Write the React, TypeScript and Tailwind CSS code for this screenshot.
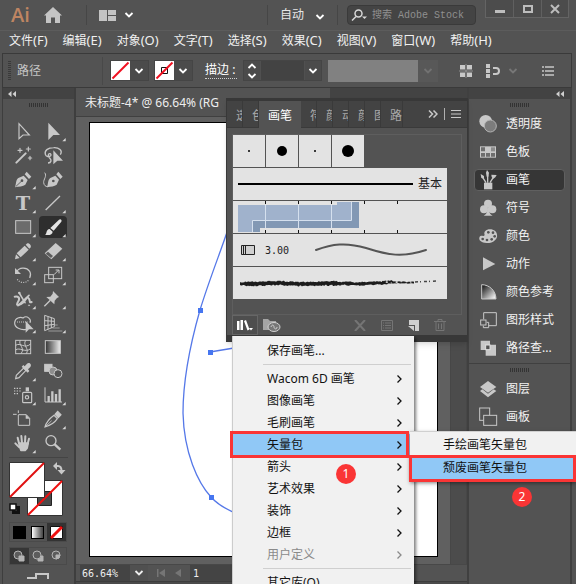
import { type ReactNode } from 'react';
import clsx from 'clsx';

const icon = '#c8c8c8';

const menus = [
  { label: '文件', key: 'F' },
  { label: '编辑', key: 'E' },
  { label: '对象', key: 'O' },
  { label: '文字', key: 'T' },
  { label: '选择', key: 'S' },
  { label: '效果', key: 'C' },
  { label: '视图', key: 'V' },
  { label: '窗口', key: 'W' },
  { label: '帮助', key: 'H' },
];

interface Tool {
  name: string;
  art: ReactNode;
  more?: boolean;
  active?: boolean;
}

// Every tool glyph is drawn on an 84x66 board
const tools: Tool[] = [
  { name: '选择工具', art: <path d="M30 11V56L42 45H61Z" fill="none" stroke={icon} strokeWidth="3.5" /> },
  { name: '直接选择工具', more: true, art: <path d="M28 8V60L43 45H63Z" fill={icon} /> },
  {
    name: '魔棒工具',
    art: (
      <g stroke={icon} strokeLinecap="round" fill="none">
        <path d="M22 56 50 28" strokeWidth="6" />
        <path d="M33 13v12M27 19h12M58 9v12M52 15h12M63 37v10M58 42h10" strokeWidth="3.5" />
      </g>
    ),
  },
  {
    name: '套索工具',
    art: (
      <g>
        <path
          d="M64 32C72 20 60 10 44 11 26 11 16 20 19 31c2 8 12 8 16 4 4-6-6-9-7-2-1 8 9 10 8 18-1 4-5 6-9 6"
          fill="none" stroke={icon} strokeWidth="4"
        />
        <path d="M43 19V61L55 50H72Z" fill={icon} />
      </g>
    ),
  },
  {
    name: '钢笔工具',
    more: true,
    art: (
      <g>
        <path d="M18 58C22 46 20 36 28 30L44 23 56 36 49 50C42 56 30 55 18 58Z" fill={icon} />
        <path d="M47 19 53 11 67 26 60 33Z" fill={icon} />
        <path d="M20 56 37 40" stroke="#535353" strokeWidth="2.5" />
        <circle cx="39" cy="38" r="4" fill="#535353" />
      </g>
    ),
  },
  {
    name: '曲率工具',
    art: (
      <g>
        <path d="M24 58C28 46 26 36 34 30L49 23 60 35 53 50C46 56 36 55 24 58Z" fill={icon} />
        <path d="M52 19 58 11 71 26 64 33Z" fill={icon} />
        <circle cx="43" cy="39" r="4" fill="#535353" />
        <path d="M17 14c8 10-4 20-3 30 1 8 6 12 12 12" fill="none" stroke={icon} strokeWidth="3" />
      </g>
    ),
  },
  {
    name: '文字工具',
    more: true,
    art: <text x="42" y="54" fontSize="58" textAnchor="middle" fill={icon} fontFamily="DejaVu Serif, serif" fontWeight="700">T</text>,
  },
  { name: '直线段工具', more: true, art: <path d="M20 54 63 12" stroke={icon} strokeWidth="4" /> },
  {
    name: '矩形工具',
    more: true,
    art: <rect x="20" y="14" width="45" height="38" fill="#6c6c6c" stroke={icon} strokeWidth="3" />,
  },
  {
    name: '画笔工具',
    more: true,
    active: true,
    art: (
      <g fill="#e4e4e4">
        <path d="M34 36 60 11C64 7 70 11 67 17L44 44Z" />
        <path d="M18 56C25 53 20 40 32 39l9 8C41 57 28 59 18 56Z" />
      </g>
    ),
  },
  {
    name: '铅笔工具',
    more: true,
    art: (
      <g fill={icon}>
        <path d="M23 40 47 17 59 29 35 52Z" />
        <path d="M50 14 55 10C60 8 68 16 65 22L61 26Z" />
        <path d="M21 43 32 54 18 58Z" />
      </g>
    ),
  },
  {
    name: '橡皮擦工具',
    more: true,
    art: (
      <g>
        <path d="M17 40 50 9 70 26 37 58Z" fill={icon} />
        <path d="M20 41 27 35 42 48 36 54Z" fill="#5c5c5c" />
      </g>
    ),
  },
  {
    name: '旋转工具',
    more: true,
    art: (
      <g fill="none" stroke={icon} strokeWidth="3.5">
        <path d="M22 24C30 10 52 8 62 22c4 7 3 14 0 20" />
        <path d="M58 49C50 58 32 58 25 46" strokeDasharray="3 4" />
        <path d="M18 12V30H36Z" fill={icon} stroke="none" />
      </g>
    ),
  },
  {
    name: '比例缩放工具',
    more: true,
    art: (
      <g fill="none" stroke={icon} strokeWidth="3">
        <rect x="29" y="10" width="39" height="34" />
        <rect x="17" y="32" width="26" height="24" />
        <path d="M45 32 59 18M50 18H60V28" />
      </g>
    ),
  },
  {
    name: '宽度工具',
    more: true,
    art: (
      <g fill="none" stroke={icon} strokeLinecap="round">
        <path d="M17 26C28 24 34 30 28 40S20 54 36 48 50 24 58 30 58 46 68 42" strokeWidth="6" />
        <path d="M30 14 48 44M27 53 60 22" strokeWidth="5" />
        <circle cx="31" cy="15" r="3" fill={icon} />
        <circle cx="60" cy="52" r="2" fill={icon} />
      </g>
    ),
  },
  {
    name: '操控变形工具',
    more: true,
    art: (
      <g>
        <path d="M42 9 60 27 54 30 47 38 46 49 22 27 34 26 41 17Z" fill={icon} />
        <path d="M34 37 16 55" stroke={icon} strokeWidth="4" />
      </g>
    ),
  },
  {
    name: '形状生成器工具',
    more: true,
    art: (
      <g>
        <path
          d="M52 52C36 56 16 46 17 32 18 18 34 14 42 18 54 8 68 22 63 32"
          fill="none" stroke={icon} strokeWidth="3.5"
        />
        <path d="M24 30H56" stroke={icon} strokeWidth="3" strokeDasharray="3 3" />
        <path d="M50 27V62L60 52H74Z" fill={icon} />
      </g>
    ),
  },
  {
    name: '透视网格工具',
    more: true,
    art: (
      <g fill="none" stroke={icon} strokeWidth="3">
        <path d="M17 10V56L46 44V20ZM27 14V52M37 17V48M17 26 46 28M17 41 46 37" />
        <path d="M48 39H56M40 48H62M28 57H70" stroke="#9a9a9a" />
      </g>
    ),
  },
  {
    name: '网格工具',
    art: (
      <g fill="none" stroke={icon} strokeWidth="3">
        <rect x="20" y="13" width="45" height="40" />
        <path d="M34 13C26 26 50 36 36 53M50 13C40 28 62 38 52 53M20 28C34 18 46 40 65 24M20 42C32 32 48 52 65 38" />
      </g>
    ),
  },
  {
    name: '渐变工具',
    art: (
      <g>
        <defs>
          <linearGradient id="tool-gradient">
            <stop offset="0" stopColor="#333333" />
            <stop offset="1" stopColor="#eeeeee" />
          </linearGradient>
        </defs>
        <rect x="19" y="14" width="45" height="38" fill="url(#tool-gradient)" stroke={icon} strokeWidth="3" />
      </g>
    ),
  },
  {
    name: '吸管工具',
    more: true,
    art: (
      <g>
        <path d="M20 56 22 46 44 24 51 31 30 53Z" fill="none" stroke={icon} strokeWidth="3.5" />
        <path d="M38 20 43 15 47 19 54 11C60 5 70 13 64 21L57 28 61 33 56 38Z" fill={icon} />
      </g>
    ),
  },
  {
    name: '混合工具',
    art: (
      <g stroke={icon} strokeWidth="3">
        <rect x="17" y="13" width="22" height="21" fill={icon} />
        <circle cx="42" cy="33" r="12" fill="#8e8e8e" />
        <circle cx="57" cy="41" r="12" fill="#535353" />
      </g>
    ),
  },
  {
    name: '符号喷枪工具',
    more: true,
    art: (
      <g fill="none" stroke={icon} strokeWidth="3.5">
        <path d="M15 13H38M15 21H38M15 29H30" strokeDasharray="4 4" />
        <path d="M50 10H60V22H50Z" fill={icon} stroke="none" />
        <rect x="41" y="25" width="27" height="31" rx="3" />
        <circle cx="54" cy="40" r="5" />
      </g>
    ),
  },
  {
    name: '柱形图工具',
    more: true,
    art: (
      <g fill="none" stroke={icon}>
        <path d="M18 10V54H69" strokeWidth="3" />
        <path d="M29 54V36M40 54V22M51 54V30M62 54V16" strokeWidth="7" />
      </g>
    ),
  },
  {
    name: '画板工具',
    art: (
      <g fill="none" stroke={icon} strokeWidth="3">
        <path d="M12 19H23M28 7V15M28 21V52H62V31L52 20H28" />
        <path d="M50 19V32H63Z" fill={icon} stroke="none" />
      </g>
    ),
  },
  {
    name: '切片工具',
    more: true,
    art: (
      <g fill="none" stroke={icon} strokeWidth="3.5">
        <path d="M18 57C22 42 34 30 45 22L55 32C46 46 34 52 18 57Z" />
        <path d="M48 19 56 10 66 20 58 29Z" fill={icon} />
        <path d="M20 55 38 38" strokeWidth="2.5" />
      </g>
    ),
  },
  {
    name: '抓手工具',
    more: true,
    art: (
      <g stroke={icon} fill={icon} strokeLinecap="round" strokeWidth="6">
        <path d="M30 34 26 17M39 32 37 12M48 32 49 13M56 35 60 20M31 46 19 34" />
        <path d="M30 34H57L54 48 48 55H36Z" strokeLinejoin="round" />
      </g>
    ),
  },
  {
    name: '缩放工具',
    art: (
      <g fill="none" stroke={icon}>
        <circle cx="36" cy="26" r="15" strokeWidth="4" />
        <path d="M47 37 64 53" strokeWidth="7" />
      </g>
    ),
  },
];

// Dock glyphs use a 60x60 board
const panels = [
  {
    name: '透明度',
    art: (
      <g>
        <circle cx="23" cy="22" r="19" fill={icon} />
        <circle cx="37" cy="36" r="18" fill="#7c7c7c" stroke="#b4b4b4" strokeWidth="3" />
      </g>
    ),
  },
  {
    name: '色板',
    art: (
      <g>
        <rect x="6" y="13" width="48" height="34" fill={icon} />
        <path d="M9 16h12v12H9zM9 33h12v11H9zM24 33h12v11H24zM39 33h12v11H39z" fill="#6e6e6e" />
        <path d="M39 16h12v12H39z" fill="#8c8c8c" />
      </g>
    ),
  },
  {
    name: '画笔',
    active: true,
    art: (
      <g stroke={icon} fill={icon}>
        <path d="M18 38H43V58H18Z" stroke="none" />
        <path d="M24 38 14 22M29 38V14M36 38 46 22" strokeWidth="4" />
        <path d="M8 12 18 18 18 26 10 24ZM27 0 33 8 31 20H26L24 8ZM40 14 56 15 52 22 46 26 41 21Z" stroke="none" />
      </g>
    ),
  },
  {
    name: '符号',
    art: (
      <g fill={icon}>
        <circle cx="30" cy="17" r="12" />
        <circle cx="18" cy="34" r="12" />
        <circle cx="43" cy="34" r="12" />
        <path d="M28 28H33C33 42 34 48 44 53H17C27 48 28 42 28 28Z" />
      </g>
    ),
  },
  {
    name: '颜色',
    art: (
      <g>
        <path d="M57 26C60 40 44 52 26 51 10 50 0 42 5 32 9 26 17 34 20 27 16 18 24 10 36 10 48 10 56 17 57 26Z" fill={icon} />
        <g fill="#535353">
          <circle cx="31" cy="19" r="4" />
          <circle cx="45" cy="20" r="4" />
          <circle cx="50" cy="31" r="4" />
          <circle cx="41" cy="40" r="4" />
          <circle cx="27" cy="42" r="4" />
          <circle cx="14" cy="39" r="4" />
        </g>
      </g>
    ),
  },
  { name: '动作', art: <path d="M15 10 52 30 15 49Z" fill={icon} /> },
  {
    name: '颜色参考',
    art: (
      <g>
        <defs>
          <linearGradient id="guide-gradient" x1="0" y1="0" x2="1" y2="1">
            <stop offset="0.1" stopColor="#222222" />
            <stop offset="0.9" stopColor="#eeeeee" />
          </linearGradient>
        </defs>
        <path d="M11 8C34 8 54 26 54 51H11Z" fill="url(#guide-gradient)" stroke={icon} strokeWidth="3" />
      </g>
    ),
  },
  {
    name: '图形样式',
    art: (
      <g fill="none" stroke={icon} strokeWidth="3">
        <path d="M17 28V8H55V47H32" />
        <rect x="8" y="30" width="16" height="15" />
        <path d="M26 37H32V53H16V47" />
      </g>
    ),
  },
  {
    name: '路径查...',
    art: (
      <g>
        <path d="M8 8H36V20H54V53H23V36H8Z" fill={icon} />
        <rect x="23" y="21" width="13" height="14" fill="#535353" stroke="#e0e0e0" strokeWidth="3" />
      </g>
    ),
  },
];

const lowerPanels = [
  {
    name: '图层',
    art: (
      <g fill={icon}>
        <path d="M30 6 55 24 30 41 6 24Z" />
        <path d="M6 36 13 31 30 44 47 31 55 36 30 55Z" />
      </g>
    ),
  },
  {
    name: '画板',
    art: (
      <g fill="#535353" stroke={icon} strokeWidth="3">
        <rect x="5" y="3" width="30" height="37" />
        <rect x="17" y="25" width="39" height="30" />
      </g>
    ),
  },
];

const libraries = [
  { name: 'Wacom 6D 画笔' },
  { name: '图像画笔' },
  { name: '毛刷画笔' },
  { name: '矢量包', active: true },
  { name: '箭头' },
  { name: '艺术效果' },
  { name: '装饰' },
  { name: '边框' },
  { name: '用户定义', disabled: true },
];

const brushTips = [
  { name: '3 点圆形', r: 1 },
  { name: '15 点圆形', r: 5 },
  { name: '扁平', r: 1 },
  { name: '20 点圆形', r: 6 },
];

// Ragged outline of the charcoal brush preview, thinning out to the right
function charcoalPath() {
  const top: string[] = [];
  const bottom: string[] = [];
  for (let x = 7; x < 182; x += 1) {
    const body = x < 12 ? 1.5 : x < 105 ? 2.2 : x < 160 ? 1.8 : 1;
    const a = Math.abs(Math.sin(x * 12.9898) * 43.7) % 1;
    const b = Math.abs(Math.sin(x * 78.233) * 31.3) % 1;
    const mid = 16.5 - Math.max(0, x - 120) / 45 + Math.sin(x / 9) * 0.4;
    top.push(`${x} ${(mid - body * (0.6 + a * 0.6)).toFixed(1)}`);
    bottom.unshift(`${x} ${(mid + body * (0.6 + b * 0.7)).toFixed(1)}`);
  }
  return `M${[...top, ...bottom].join('L')}Z`;
}

function Chevron({ className }: { className?: string }) {
  return (
    <svg viewBox="0 0 10 6" className={clsx('h-[6px] w-[10px] shrink-0', className)} fill="none" stroke="currentColor" strokeWidth="1.8">
      <path d="M1.500 1 5 4.500 8.500 1" />
    </svg>
  );
}

function Grip() {
  return (
    <div className="flex h-1 justify-center gap-px">
      {Array.from({ length: 10 }, (_, i) => (
        <span key={i} className="w-px bg-[#333333]" />
      ))}
    </div>
  );
}

function Collapse() {
  return (
    <svg viewBox="0 0 8 6" className="h-[6px] w-2" fill="#d0d0d0">
      <path d="M3.500 0V6L0 3ZM8 0V6L4.500 3Z" />
    </svg>
  );
}

function TitleBar() {
  return (
    <header className="flex h-[30px] items-center text-[#d8d8d8]">
      <span className="ml-[11px] w-[19px] font-[Open_Sans,sans-serif] text-xl font-semibold leading-7 text-[#be8562]">Ai</span>
      <button type="button" aria-label="主页" className="ml-[14px]">
        <svg viewBox="0 0 18 16" className="h-4 w-[18px]" fill="#c4c4c4">
          <path d="M9 0 18 8.500H16V16H11V10.500H7V16H2V8.500H0Z" />
        </svg>
      </button>
      <span className="ml-[24px] h-5 w-px bg-[#464646]" />
      <button type="button" aria-label="排列文档" className="ml-[12px] flex items-center gap-2 text-white">
        <svg viewBox="0 0 17 11" className="h-[11px] w-[17px]" fill="#c4c4c4">
          <path d="M0 0h8v11H0zM9 0h8v5H9zM9 6h8v5H9z" />
        </svg>
        <Chevron />
      </button>
      <div className="flex-1" />
      <span className="h-5 w-px bg-[#464646]" />
      <label className="relative ml-[12px] flex items-center">
        <select aria-label="工作区" className="w-12 appearance-none bg-transparent text-xs text-[#e6e6e6] outline-none">
          <option>自动</option>
        </select>
        <Chevron className="pointer-events-none -ml-[13px] mt-1 text-white" />
      </label>
      <span className="ml-[12px] h-5 w-px bg-[#464646]" />
      <label className="ml-[9px] flex h-[20px] w-[129px] items-center gap-1 rounded-sm border border-[#3a3a3a] bg-[#444444] pl-[3px]">
        <svg viewBox="0 0 17 12" className="h-3 w-[17px] shrink-0" fill="none" stroke="#d8d8d8" strokeWidth="1.5">
          <circle cx="7.500" cy="4.500" r="3.500" />
          <path d="M5 7.500 1 11.500" />
          <path d="M11 7.500h5L13.500 10Z" fill="#d8d8d8" stroke="none" />
        </svg>
        <input
          type="search"
          aria-label="搜索 Adobe Stock"
          placeholder="搜索 Adobe Stock"
          className="w-full min-w-0 bg-transparent font-[Liberation_Mono,Noto_Sans_CJK_SC,monospace] text-[10px] outline-none placeholder:text-[#909090]"
        />
      </label>
      <div className="ml-[9px] mr-[7px] flex h-[18px] self-start border border-t-0 border-[#646464] bg-[#4c4c4c]">
        <button type="button" aria-label="最小化" className="flex w-7 items-center justify-center border-r border-[#606060]">
          <span className="mt-[6px] h-[3px] w-[10px] bg-[#bdbdbd]" />
        </button>
        <button type="button" aria-label="最大化" className="flex w-7 items-center justify-center border-r border-[#606060]">
          <span className="h-2 w-[10px] border-2 border-[#bdbdbd]" />
        </button>
        <button type="button" aria-label="关闭" className="flex w-[26px] items-center justify-center">
          <svg viewBox="0 0 10 10" className="h-[10px] w-[10px]" stroke="#bdbdbd" strokeWidth="2">
            <path d="M1 1 9 9M9 1 1 9" />
          </svg>
        </button>
      </div>
    </header>
  );
}

function MenuBar() {
  return (
    <nav className="flex h-[23px] items-start gap-[15px] border-t border-[#5c5c5c] pl-[9px] text-xs leading-[18px] text-[#f0f0f0]">
      {menus.map((menu) => (
        <button key={menu.key} type="button" className="whitespace-nowrap">
          {menu.label}
          <span className="text-[13px]">({menu.key})</span>
        </button>
      ))}
    </nav>
  );
}

function ControlBar() {
  return (
    <div className="ml-[2px] mr-1 flex h-[35px] items-center border border-[#3a3a3a] text-xs text-white">
      <svg viewBox="0 0 3 19" className="ml-[5px] h-[19px] w-[3px]" stroke="#3a3a3a" strokeWidth="3" strokeDasharray="1 1">
        <path d="M1.500 0V19" />
      </svg>
      <span className="ml-[6px] text-[#c4c4c4]">路径</span>
      <span className="ml-[61px] h-7 w-px bg-[#494949]" />
      <button type="button" aria-label="填色" className="ml-[7px] flex h-[21px] w-[39px] items-center gap-1 border border-[#454545] bg-[#4b4b4b]">
        <svg viewBox="0 0 19 19" className="h-[19px] w-[19px]">
          <path d="M0 0h19v19H0z" fill="#ffffff" />
          <path d="M1.500 17.500 17.500 1.500" stroke="#f01020" strokeWidth="2" />
        </svg>
        <Chevron />
      </button>
      <button type="button" aria-label="描边颜色" className="ml-[5px] flex h-[21px] w-[39px] items-center gap-1 border border-[#454545] bg-[#4b4b4b]">
        <svg viewBox="0 0 19 19" className="h-[19px] w-[19px]">
          <path d="M0 0h19v19H0z" fill="#ffffff" />
          <path d="M6.500 6.500h6v6h-6z" fill="none" stroke="#111111" />
          <path d="M1.500 17.500 17.500 1.500" stroke="#f01020" strokeWidth="2" />
        </svg>
        <Chevron />
      </button>
      <label htmlFor="stroke-weight" className="ml-3 w-[32px] whitespace-nowrap border-b border-dotted border-[#d0d0d0] leading-4">
        描边 :
      </label>
      <div className="ml-[6px] flex h-[21px] border border-[#454545] bg-[#434343]">
        <button type="button" aria-label="调整描边粗细" className="flex w-[17px] flex-col items-center justify-center gap-1 border-r border-[#505050] bg-[#4b4b4b]">
          <Chevron className="rotate-180" />
          <Chevron />
        </button>
        <input id="stroke-weight" type="text" className="w-[43px] bg-transparent px-1 outline-none" />
        <button type="button" aria-label="描边粗细预设" className="flex w-[17px] items-center justify-center border-l border-[#505050] bg-[#4b4b4b]">
          <Chevron />
        </button>
      </div>
      <label className="ml-[6px] flex h-[22px] items-center bg-[#585858]">
        <select disabled aria-label="变量宽度配置文件" className="h-full w-[90px] appearance-none bg-[#818181]" />
        <Chevron className="mx-[5px] text-[#727272]" />
      </label>
      <div className="flex-1" />
      <button type="button" aria-label="对齐" className="mr-[13px]">
        <svg viewBox="0 0 14 14" className="h-[14px] w-[14px]" fill={icon}>
          <path d="M1 1h5v4.500H1zM8 1h5v4.500H8zM1 8.500h5V13H1zM8 8.500h5V13H8z" />
          <path d="M7 0V14M0 7H14" stroke={icon} strokeWidth="0.5" />
        </svg>
      </button>
      <button type="button" aria-label="变换" className="mr-[24px] flex items-center gap-2 text-[#777777]">
        <svg viewBox="0 0 14 14" className="h-[14px] w-[14px]" fill={icon}>
          <path d="M0 0h4v4H0zM0 5h4v4H0zM0 10h4v4H0z" />
          <path d="M7 4h3a3 3 0 0 1 0 6H7" fill="none" stroke={icon} strokeWidth="2" />
        </svg>
        <Chevron />
      </button>
      <button type="button" aria-label="面板选项" className="mr-[17px]">
        <svg viewBox="0 0 12 10" className="h-[10px] w-3" stroke={icon} strokeWidth="1.5">
          <path d="M0 1H2M3 1H12M0 5H2M3 5H12M0 9H2M3 9H12" />
        </svg>
      </button>
    </div>
  );
}

function ToolPanel() {
  return (
    <aside className="ml-[2px] flex w-[74px] shrink-0 flex-col border-r-2 border-l border-[#3e3e3e]">
      <div className="flex h-[11px] items-center bg-[#434343] pl-[5px]">
        <Collapse />
      </div>
      <div className="px-[6px] pt-1">
        <Grip />
        <div className="mt-[13px] grid grid-cols-[28px_28px] gap-[2px]">
          {tools.map((tool) => (
            <button
              key={tool.name}
              type="button"
              aria-label={tool.name}
              className={clsx('h-[22px] w-7', tool.active && 'rounded-sm bg-[#2e2e2e]')}
            >
              <svg viewBox="0 0 84 66" className="h-[22px] w-7">
                {tool.art}
                {tool.more && <path d="M80 54V64H70Z" fill="#d8d8d8" />}
              </svg>
            </button>
          ))}
        </div>
        <div className="mt-[3px] h-px bg-[#444444]" />
        <svg viewBox="0 0 57 54" className="mt-1 h-[54px] w-[57px]" role="img" aria-label="填色和描边">
          <path d="M18.500 18.500h35v35h-35z" fill="#ffffff" stroke="#333333" />
          <path d="M28.500 29.500h14v14h-14z" fill="#4a4a4a" stroke="#222222" />
          <path d="M19 53 53 19" stroke="#f01010" strokeWidth="2" />
          <path d="M.5.5h35v35H.5z" fill="#ffffff" stroke="#333333" />
          <path d="M1 35 35 1" stroke="#e01010" strokeWidth="2" />
          <path d="M46 4H49C52 4 52.500 6 52.500 9" fill="none" stroke={icon} strokeWidth="2" />
          <path d="M48 0V8L44 4ZM48.500 8H56.500L52.500 12.500Z" fill={icon} />
          <path d="M4.500 45.500h5v5h-5z" fill="none" stroke="#111111" strokeWidth="3" />
          <path d="M1 42h6v6H1z" fill="#ffffff" stroke="#111111" strokeWidth="1.5" />
        </svg>
        <div className="mt-[6px] grid h-5 w-[58px] grid-cols-3 border border-[#4a4a4a]">
          <button type="button" aria-label="颜色" className="flex items-center justify-center">
            <span className="h-[13px] w-[13px] bg-black" />
          </button>
          <button type="button" aria-label="渐变" className="flex items-center justify-center">
            <span className="h-[13px] w-[13px] border border-black bg-linear-to-r from-white to-[#444444]" />
          </button>
          <button type="button" aria-label="无" className="flex items-center justify-center bg-[#333333]">
            <svg viewBox="0 0 13 13" className="h-[13px] w-[13px]">
              <path d="M.5.5h12v12H.5z" fill="#ffffff" stroke="#111111" />
              <path d="M1 12 12 1" stroke="#f01010" strokeWidth="3" />
            </svg>
          </button>
        </div>
        <div className="mt-[5px] grid h-[18px] w-[58px] grid-cols-3 border border-[#4a4a4a]">
          {['正常绘图', '背面绘图', '内部绘图'].map((mode, i) => (
            <button key={mode} type="button" aria-label={mode} className={clsx('flex items-center justify-center', i === 0 && 'bg-[#363636]')}>
              <svg viewBox="0 0 12 12" className="h-3 w-3" fill="none" stroke="#b4b4b4">
                {i === 1 && <path d="M6 6h5v5H6z" fill="#b4b4b4" />}
                <circle cx="5" cy="5" r="4" fill="#5c5c5c" />
                {i === 0 && <path d="M6 6h5v5H6z" fill="#b4b4b4" />}
                {i === 2 && <path d="M5 5h4A4 4 0 0 1 5 9z" fill="#b4b4b4" />}
              </svg>
            </button>
          ))}
        </div>
        <button type="button" aria-label="更改屏幕模式" className="ml-[18px] mt-2 block">
          <svg viewBox="0 0 22 6" className="h-[6px] w-[22px]" fill={icon}>
            <path d="M8 0H22V6H20V2H10V6H0V4H8Z" />
          </svg>
        </button>
      </div>
    </aside>
  );
}

function DocumentArea() {
  return (
    <main className="flex min-w-0 flex-1 flex-col bg-[#606060]">
      <div className="flex h-[29px] bg-[#434343]">
        <div className="w-[254px] whitespace-nowrap border-b border-[#404040] bg-[#535353] pl-[9px] pt-[2px] text-xs leading-[26px] text-[#eeeeee]">
          未标题-4* @ 66.64% (RG
        </div>
      </div>
      <div className="flex min-h-0 flex-1">
        <div className="relative mb-[7px] ml-[13px] mr-3 mt-[5px] flex-1 border border-black bg-white">
          <svg viewBox="0 0 160 420" className="absolute left-0 top-0 h-[420px] w-[160px]" fill="none" stroke="#5578e8" strokeWidth="1.3">
            <path d="M144 88C135 118 121 151 110 187 100 222 93 258 93 290 94 330 108 360 121 374 128 382 137 387 150 392" />
            <path d="M120 229 150 224" />
            <path d="M108 185h5v5h-5zM118 227h5v5h-5zM119 372h5v5h-5z" fill="#4676f0" stroke="none" />
          </svg>
        </div>
        <div className="w-[17px] border-x border-[#474747] bg-[#4c4c4c]" />
      </div>
      <div className="flex h-[17px] border-t border-[#484848] bg-[#535353] font-[DejaVu_Sans_Mono,monospace] text-[10px] text-[#eeeeee]">
        <label className="ml-1 flex w-[68px] items-center bg-[#444444]">
          <select aria-label="缩放级别" className="w-[50px] appearance-none bg-transparent pl-[2px] outline-none">
            <option>66.64%</option>
          </select>
          <span className="flex h-full flex-1 items-center justify-center bg-[#505050]">
            <Chevron />
          </span>
        </label>
        <div className="flex w-[42px] items-center justify-center">
          <svg viewBox="0 0 26 8" className="h-2 w-[26px]" fill="#757575">
            <path d="M1 0H2.500V8H1ZM9 0V8L3 4ZM25 0V8L19 4Z" />
          </svg>
        </div>
        <input aria-label="画板导航" defaultValue="1" className="w-[48px] bg-[#444444] pl-[3px] outline-none" />
      </div>
      <div className="h-[3px] border-t border-[#3c3c3c] bg-[#4a4a4a]" />
    </main>
  );
}

function PanelButton({ name, art, active }: { name: string; art: ReactNode; active?: boolean }) {
  return (
    <button
      type="button"
      className={clsx(
        'flex h-[22px] w-full items-center gap-2 rounded-sm border pl-[3px] text-left text-xs text-[#f2f2f2]',
        active ? 'border-[#606060] bg-[#363636]' : 'border-transparent',
      )}
    >
      <svg viewBox="0 0 60 60" className="h-5 w-5 shrink-0">{art}</svg>
      <span className="whitespace-nowrap">{name}</span>
    </button>
  );
}

function Dock() {
  return (
    <aside className="mr-1 flex w-[105px] shrink-0 flex-col border-x-2 border-[#404040]">
      <div className="flex h-[11px] items-center justify-end bg-[#434343] pr-[6px]">
        <Collapse />
      </div>
      <div className="flex flex-col gap-[6px] px-[5px] pb-1 pt-1">
        <Grip />
        {panels.map((panel) => (
          <PanelButton key={panel.name} {...panel} />
        ))}
      </div>
      <div className="flex flex-col gap-[6px] border-t border-[#404040] px-[5px] pt-1">
        <Grip />
        {lowerPanels.map((panel) => (
          <PanelButton key={panel.name} {...panel} />
        ))}
      </div>
    </aside>
  );
}

function ClippedTab({ name, last }: { name: string; last?: boolean }) {
  return (
    <button
      type="button"
      className={clsx('overflow-hidden whitespace-nowrap border-r border-[#3a3a3a] pl-[9px] pt-[3px] text-left text-[#a8a8a8]', last ? 'w-[22px]' : 'w-4')}
    >
      {name}
    </button>
  );
}

function BrushPanel() {
  return (
    <section aria-label="画笔" className="absolute left-[226px] top-[98px] w-[242px] border-x border-t-3 border-b-[7px] border-[#383838] bg-[#535353] shadow-md">
      <div className="flex h-[27px] border-b border-[#3a3a3a] bg-[#434343] text-xs leading-6">
        <ClippedTab name="透" />
        <ClippedTab name="色" />
        <button type="button" className="-mb-px w-[42px] bg-[#535353] pt-[2px] text-white">画笔</button>
        <ClippedTab name="符" />
        <ClippedTab name="颜" />
        <ClippedTab name="动" />
        <ClippedTab name="颜" />
        <ClippedTab name="图" />
        <ClippedTab name="路" last />
        <div className="ml-auto mr-[6px] flex items-center gap-[6px]">
          <svg viewBox="0 0 10 8" className="h-2 w-[10px]" fill="none" stroke={icon} strokeWidth="1.5">
            <path d="M1 .5 4.500 4 1 7.500M5.500.5 9 4 5.500 7.500" />
          </svg>
          <span className="h-3 w-px bg-[#b0b0b0]" />
          <svg viewBox="0 0 10 8" className="h-2 w-[10px]" stroke={icon}>
            <path d="M0 .5H10M0 4H10M0 7.500H10" />
          </svg>
        </div>
      </div>
      <div className="mx-[5px] mt-[6px] flex h-[181px] flex-col gap-px border border-[#5e5e5e] text-[#222222]">
        <div className="flex gap-px">
          {brushTips.map((tip) => (
            <button key={tip.name} type="button" aria-label={tip.name} className="h-8 w-8 bg-[#e3e3e3]">
              <svg viewBox="0 0 32 32" className="h-8 w-8">
                <circle cx="16" cy="16" r={tip.r} />
              </svg>
            </button>
          ))}
        </div>
        <button type="button" className="flex h-8 w-[214px] items-center gap-[5px] bg-[#e3e3e3] pl-[5px] text-xs">
          <span className="h-[2px] w-[175px] bg-black" />
          基本
        </button>
        <button type="button" aria-label="图案画笔" className="h-8 w-[214px] bg-[#e3e3e3]">
          <svg viewBox="0 0 214 32" className="h-8 w-[214px]">
            <path d="M5 4H104V1H126V27H27V31H5Z" fill="#a0b2cc" />
            <path d="M118 1H126V27H27V31H20V20H118Z" fill="#8298b4" />
            <path d="M19.500 31V19.500H118.500V1M32.500 4V27M65.500 4V27M98.500 4V27" fill="none" stroke="#d5e0ee" />
            <path d="M32.500 0V3M65.500 0V3M98.500 0V3M131.500 0V3M164.500 0V3M32.500 29V32M65.500 29V32M98.500 29V32M131.500 29V32M164.500 29V32" stroke="#111111" />
          </svg>
        </button>
        <button type="button" className="flex h-8 w-[214px] items-center bg-[#e3e3e3] pl-2 font-[DejaVu_Sans_Mono,monospace] text-[10px]">
          <svg viewBox="0 0 14 10" className="h-[10px] w-[14px]" fill="#d0d0d0" stroke="#222222">
            <path d="M.5.5h13v9H.5zM2.500.5v9M4.500.5v9" />
          </svg>
          <span className="ml-[10px] w-[49px] text-left">3.00</span>
          <svg viewBox="0 0 114 16" className="h-4 w-[114px]" fill="none" stroke="#555555" strokeLinecap="round" strokeWidth="2">
            <path d="M2 8C18 2 32 0 52 6 74 13 88 16 112 8" />
          </svg>
        </button>
        <button type="button" aria-label="炭笔" className="h-8 w-[214px] bg-[#e3e3e3]">
          <svg viewBox="0 0 214 32" className="h-8 w-[214px]">
            <path d={charcoalPath()} fill="#1c1c1c" />
            <path d="M143 13 158 16 172 14 182 17" fill="none" stroke="#e3e3e3" strokeWidth="1.5" strokeDasharray="2 3 1 4" />
            <path d="M182 15 205 14" stroke="#444444" strokeWidth="1.5" strokeDasharray="3 2 1 3" />
          </svg>
        </button>
      </div>
      <div className="flex h-5 items-center">
        <button type="button" aria-label="画笔库菜单" className="ml-[5px] flex h-full w-[26px] items-center justify-center border border-[#666666] bg-[#4e4e4e]">
          <svg viewBox="0 0 16 11" className="h-[11px] w-4" fill="#ffffff">
            <path d="M0 1h2.500v9H0zM3.500 0H6v10H3.500zM7 1 9 0 12.500 9.500 10.500 10.500ZM12 8h4l-2 2.500Z" />
          </svg>
        </button>
        <button type="button" aria-label="库面板" className="ml-[5px]">
          <svg viewBox="0 0 18 13" className="h-[13px] w-[18px]">
            <path d="M0 0H5L7 2H13V11H0Z" fill="#a4a4a4" />
            <ellipse cx="11" cy="8" rx="6" ry="4.500" fill="#777777" stroke="#d0d0d0" />
            <path d="M8 8C9 5 11 6 11 8S14 11 14 8" fill="none" stroke="#d0d0d0" />
          </svg>
        </button>
        <div className="ml-auto mr-[21px] flex items-center gap-[15px]">
          <button type="button" disabled aria-label="移去画笔描边">
            <svg viewBox="0 0 12 11" className="h-[11px] w-3" stroke="#757575" strokeWidth="2">
              <path d="M1 0 11 11M11 0 1 11" />
            </svg>
          </button>
          <button type="button" disabled aria-label="所选对象的选项">
            <svg viewBox="0 0 12 11" className="h-[11px] w-3" fill="none" stroke="#757575">
              <path d="M.5.5h11v10H.5zM2 3H3M4 3H10M2 5.500H3M4 5.500H10M2 8H3M4 8H10" />
            </svg>
          </button>
          <button type="button" aria-label="新建画笔">
            <svg viewBox="0 0 11 11" className="h-[11px] w-[11px]" fill="#d0d0d0">
              <path d="M1 0H11V11H7V5H1ZM0 6H6V11Z" />
            </svg>
          </button>
          <button type="button" disabled aria-label="删除画笔">
            <svg viewBox="0 0 12 12" className="h-3 w-3" fill="none" stroke="#757575">
              <path d="M0 2.500H12M4 2V.5H8V2M2 3V11.500H10V3M4.500 4.500V10M7.500 4.500V10" />
            </svg>
          </button>
        </div>
      </div>
    </section>
  );
}

function LibraryMenu() {
  return (
    <div role="menu" className="absolute left-[232px] top-[336px] w-[182px] border-l border-[#cccccc] bg-[#f1f1f1] pt-1 text-xs text-[#111111] shadow-[2px_2px_3px_#00000080]">
      <button type="button" role="menuitem" className="flex h-[22px] w-full items-center pl-[34px]">保存画笔...</button>
      <div className="ml-[30px] mr-[3px] h-[6px] py-[2px]">
        <div className="h-px bg-[#cfcfcf]" />
      </div>
      {libraries.map((item) => (
        <button
          key={item.name}
          type="button"
          role="menuitem"
          disabled={item.disabled}
          className={clsx(
            'flex h-[22px] w-full items-center justify-between pl-[34px] pr-3',
            item.active && 'bg-[#90c8f6]',
            item.disabled && 'text-[#8a8a8a]',
          )}
        >
          {item.name}
          <svg viewBox="0 0 5 8" className="h-2 w-[5px]" fill="none" stroke="currentColor" strokeWidth="1.3">
            <path d="M.5.5 4 4 .5 7.500" />
          </svg>
        </button>
      ))}
      <div className="ml-[30px] mr-[3px] h-[6px] py-[2px]">
        <div className="h-px bg-[#cfcfcf]" />
      </div>
      <button type="button" role="menuitem" className="flex h-[22px] w-full items-center pl-[34px]">其它库(O)</button>
    </div>
  );
}

function VectorPackMenu() {
  return (
    <div role="menu" className="absolute left-[410px] right-0 top-[431px] border-t border-[#d0d0d0] bg-[#f1f1f1] pb-[2px] pt-[2px] text-xs text-[#111111] shadow-[0_2px_4px_#00000080]">
      <button type="button" role="menuitem" className="flex h-[22px] w-full items-center pl-[33px]">手绘画笔矢量包</button>
      <button type="button" role="menuitem" className="flex h-[23px] w-full items-center bg-[#90c8f6] pl-[33px]">颓废画笔矢量包</button>
    </div>
  );
}

export default function App() {
  return (
    <div className="relative flex h-screen flex-col overflow-hidden bg-[#535353] font-[Noto_Sans,Noto_Sans_CJK_SC,sans-serif]">
      <TitleBar />
      <MenuBar />
      <ControlBar />
      <div className="flex min-h-0 flex-1">
        <ToolPanel />
        <DocumentArea />
        <Dock />
      </div>

      <BrushPanel />
      <LibraryMenu />
      <VectorPackMenu />

      <div className="absolute left-[230px] top-[431px] h-[27px] w-[179px] border-3 border-[#fa3535]" />
      <div className="absolute left-[409px] right-0 top-[455px] h-[27px] border-3 border-[#fa3535]" />
      <span className="absolute left-[336px] top-[464px] h-5 w-5 rounded-full bg-[#fa3535] text-center text-xs leading-5 text-white">1</span>
      <span className="absolute left-[512px] top-[487px] h-5 w-5 rounded-full bg-[#fa3535] text-center text-xs leading-5 text-white">2</span>
    </div>
  );
}
